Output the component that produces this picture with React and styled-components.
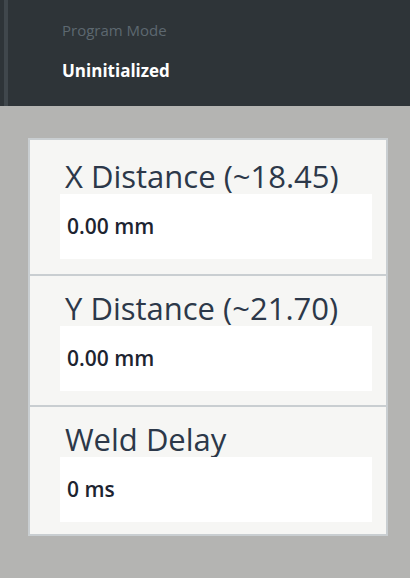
import React from "react";
import styled, { createGlobalStyle } from "styled-components";

const GlobalStyle = createGlobalStyle`
  html, body {
    margin: 0;
    padding: 0;
    background: #b4b4b2;
    font-family: "Open Sans", "Noto Sans", sans-serif;
  }
`;

const fields = [
  { label: "X Distance (~18.45)", value: "0.00 mm" },
  { label: "Y Distance (~21.70)", value: "0.00 mm" },
  { label: "Weld Delay", value: "0 ms" },
];

const App = () => {
  return (
    <>
      <GlobalStyle />
      <Page>
        <Header>
          <ModeLabel>Program Mode</ModeLabel>
          <ModeValue>Uninitialized</ModeValue>
        </Header>
        <Body>
          <Card>
            {fields.map((f, i) => (
              <Section
                key={f.label}
                $first={i === 0}
                $last={i === fields.length - 1}
              >
                <FieldLabel>{f.label}</FieldLabel>
                <ValueBox>{f.value}</ValueBox>
              </Section>
            ))}
          </Card>
        </Body>
      </Page>
    </>
  );
};

const Page = styled.div`
  width: 410px;
  min-height: 578px;
  background: #b4b4b2;
`;

const Header = styled.div`
  height: 106px;
  box-sizing: border-box;
  background: #2e3438;
  border-left: 4px solid #2e3438;
  box-shadow: inset 4px 0 0 #40474c;
  padding: 20px 0 0 58px;
  display: flex;
  flex-direction: column;
`;

const ModeLabel = styled.div`
  font-size: 15px;
  line-height: 20px;
  color: #5d6870;
`;

const ModeValue = styled.div`
  margin-top: 21px;
  font-size: 17px;
  line-height: 20px;
  font-weight: 700;
  color: #ffffff;
`;

const Body = styled.div`
  padding: 32px 22px 0 28px;
`;

const Card = styled.div`
  width: 360px;
  box-sizing: border-box;
  border: 2px solid #c9ced1;
  background: #f6f6f4;
`;

const Section = styled.div`
  display: flex;
  flex-direction: column;
  padding: ${({ $first }) => ($first ? "18px" : "14px")} 14px
    ${({ $first, $last }) => ($first ? "15px" : $last ? "12px" : "14px")} 30px;
  border-top: ${({ $first }) => ($first ? "none" : "2px solid #c9ced1")};
`;

const FieldLabel = styled.div`
  padding-left: 5px;
  font-size: 31px;
  line-height: 36px;
  color: #2c3849;
  white-space: nowrap;
`;

const ValueBox = styled.div`
  height: 65px;
  box-sizing: border-box;
  background: #ffffff;
  padding: 18px 7px 0;
  font-size: 21px;
  line-height: 28px;
  font-weight: 600;
  color: #1d2430;
`;

export default App;
